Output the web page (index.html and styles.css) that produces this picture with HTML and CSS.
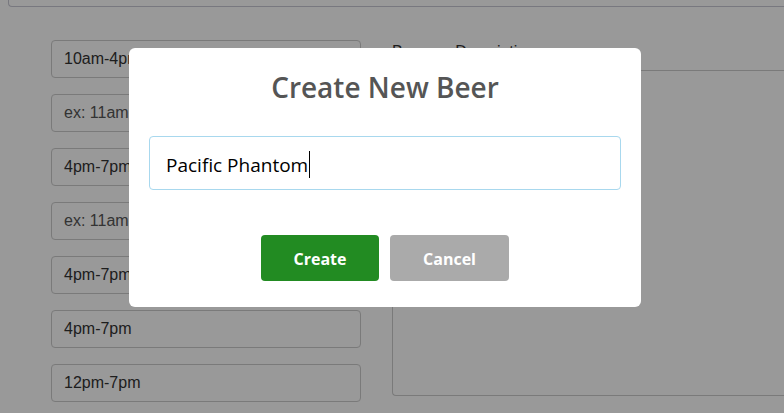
FILE: index.html
```html
<!DOCTYPE html>
<html>
<head>
<meta charset="utf-8">
<link rel="stylesheet" href="styles.css">
</head>
<body>
<div class="page">
  <div class="topbox"></div>
  <div class="form">
    <div class="hours">
      <div class="field">10am-4pm</div>
      <div class="field ph">ex: 11am-4pm</div>
      <div class="field">4pm-7pm</div>
      <div class="field ph">ex: 11am-4pm</div>
      <div class="field">4pm-7pm</div>
      <div class="field">4pm-7pm</div>
      <div class="field">12pm-7pm</div>
    </div>
    <div class="desc">
      <div class="label">Brewery Description:</div>
      <div class="textarea"></div>
    </div>
  </div>
</div>
<div class="overlay"></div>
<div class="modal">
  <h1 class="title">Create New Beer</h1>
  <div class="name-input"><span class="value">Pacific Phantom</span><span class="caret"></span></div>
  <div class="actions">
    <button class="btn create">Create</button>
    <button class="btn cancel">Cancel</button>
  </div>
</div>
</body>
</html>
```
FILE: styles.css
```css
* { box-sizing: border-box; }
html, body { margin: 0; padding: 0; }
body {
  width: 784px;
  height: 413px;
  overflow: hidden;
  background: #fff;
  font-family: "Liberation Sans", Arial, sans-serif;
  color: #333;
  position: relative;
}
.page { padding-left: 8px; }
.topbox {
  height: 7px;
  border: 1px solid #c8c8d4;
  border-top: none;
  border-right: none;
  border-bottom-left-radius: 4px;
}
.form {
  display: flex;
  padding-left: 43px;
  padding-top: 33px;
}
.hours {
  flex: 0 0 310px;
  display: flex;
  flex-direction: column;
  gap: 16px;
}
.field {
  height: 38px;
  border: 1px solid #ccc;
  border-radius: 4px;
  padding: 0 12px;
  font-size: 16px;
  line-height: 36px;
  color: #333;
}
.field.ph { color: #555; }
.desc {
  margin-left: 31px;
  flex: 1 1 auto;
}
.label {
  font-size: 16px;
  line-height: 18px;
  margin-top: 3px;
  color: #333;
}
.textarea {
  margin-top: 9px;
  height: 326px;
  border: 1px solid #ccc;
  border-right: none;
  border-radius: 4px 0 0 4px;
}
.overlay {
  position: absolute;
  inset: 0;
  background: rgba(0, 0, 0, 0.4);
}
.modal {
  position: absolute;
  left: 129px;
  top: 48px;
  width: 512px;
  height: 259px;
  background: #fff;
  border-radius: 6px;
  padding: 20px 20px 0;
  font-family: "Open Sans", "Noto Sans", sans-serif;
}
.title {
  margin: 0;
  text-align: center;
  font-size: 28px;
  font-weight: 600;
  line-height: 38px;
  color: #555;
}
.name-input {
  margin-top: 30px;
  height: 54px;
  border: 1px solid #a8d8ee;
  border-radius: 4px;
  padding: 3px 0 0 16px;
  display: flex;
  align-items: center;
  font-size: 19px;
  color: #000;
}
.caret {
  display: inline-block;
  width: 1px;
  height: 27px;
  background: #000;
  margin-left: 1px;
}
.actions {
  display: flex;
  justify-content: center;
  gap: 11px;
  margin-top: 45px;
}
.btn {
  border: none;
  border-radius: 4px;
  height: 46px;
  width: 118px;
  color: #fff;
  font-family: "Open Sans", "Noto Sans", sans-serif;
  font-weight: 700;
  font-size: 16px;
  padding: 2px 0 0;
}
.btn.create { background: #228b22; }
.btn.cancel { background: #aaa; width: 119px; }
```
